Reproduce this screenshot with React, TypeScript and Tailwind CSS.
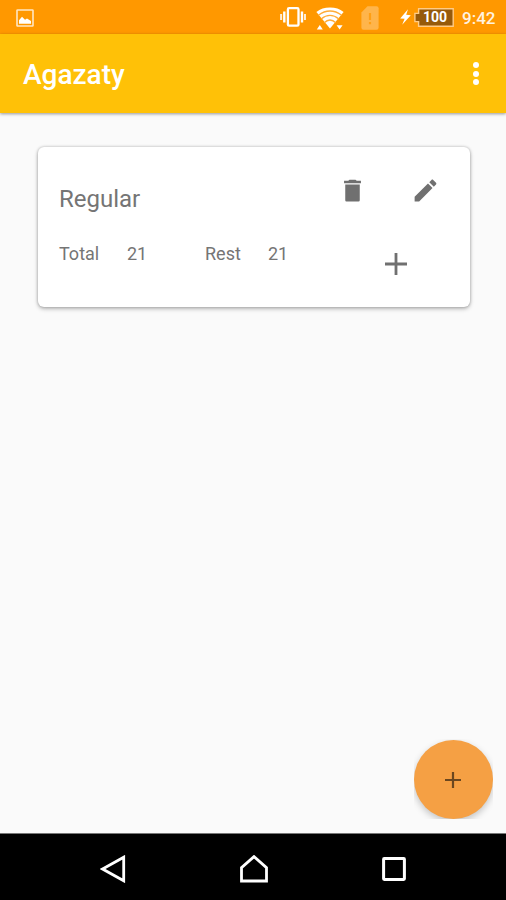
import React from 'react';

interface IconProps {
	className?: string;
}

function PictureIcon({ className }: IconProps) {
	return (
		<svg viewBox="0 0 18 18" className={className}>
			<rect x="1" y="1" width="16" height="16" rx="0.6" fill="none" stroke="#ffe6c4" strokeWidth="1.6" />
			<path d="M3 14.8V11.2L6 7.8L9 10.8L11 9.6L15 12V14.8Z" fill="#fff" />
		</svg>
	);
}

function VibrateIcon({ className }: IconProps) {
	return (
		<svg viewBox="0 0 26 20" className={className} fill="none" stroke="#fff">
			<rect x="7.9" y="1.2" width="10.6" height="17.4" rx="1.2" strokeWidth="2.3" />
			<path d="M4.3 4.5v11M22 4.5v11" strokeWidth="2.4" />
			<path d="M1.1 7v6M25 7v6" strokeWidth="2" stroke="#ffecd2" />
		</svg>
	);
}

function WifiIcon({ className }: IconProps) {
	return (
		<svg viewBox="0 0 28 24" className={className}>
			<path d="M14 21.5L0.4 5Q6 0.6 14 0.6T27.6 5Z" fill="#fff" />
			<path
				d="M2.4 8.3Q8 4 14 4T25.6 8.3M5.2 12Q9.5 8.4 14 8.4T22.8 12M8.2 15.8Q11 13 14 13T19.8 15.8"
				fill="none"
				stroke="#ffac38"
				strokeWidth="1.3"
			/>
			<path d="M0.8 22.4L3.8 18L6.8 22.4ZM20.6 18.2H26.6L23.6 22.6Z" fill="#fff" />
		</svg>
	);
}

function SimAlertIcon({ className }: IconProps) {
	return (
		<svg viewBox="0 0 18 24" className={className}>
			<path
				d="M6.5 0.2H15.5Q17.6 0.2 17.6 2.3V21.7Q17.6 23.8 15.5 23.8H2.5Q0.4 23.8 0.4 21.7V6.5Z"
				fill="#ffb54b"
			/>
			<path d="M9 7v7M9 16v2.2" stroke="#ff9f14" strokeWidth="2.2" />
		</svg>
	);
}

function BoltIcon({ className }: IconProps) {
	return (
		<svg viewBox="0 0 11 16" className={className}>
			<path d="M8 0.2L0.2 9.4L4.6 9.8L2.2 15.8L10.8 6.2L6.2 5.8Z" fill="#fff" />
		</svg>
	);
}

function Battery({ level }: { level: number }) {
	return (
		<div className="relative flex h-[19px] w-[40px] items-center justify-center">
			<svg viewBox="0 0 40 19" className="absolute inset-0 h-full w-full">
				<path
					d="M4.6 0.8H39.2V18.2H4.6V13.6H0.9V5.4H4.6Z"
					fill="#965a0a"
					stroke="#ffcb86"
					strokeWidth="1.4"
				/>
			</svg>
			<span className="relative left-[1.5px] text-[14px] font-bold leading-none text-white">{level}</span>
		</div>
	);
}

function StatusBar() {
	return (
		<header className="flex h-[34px] items-start bg-[#ff9800] pl-[16px] pr-[10px]">
			<PictureIcon className="mt-[9px] h-[18px] w-[18px]" />
			<div className="ml-auto flex items-start">
				<VibrateIcon className="mt-[7px] h-[20px] w-[26px]" />
				<WifiIcon className="ml-[10.5px] mt-[7px] h-[24px] w-[28px]" />
				<SimAlertIcon className="ml-[16.5px] mt-[6px] h-[24px] w-[18px]" />
				<BoltIcon className="ml-[21px] mt-[9px] h-[16px] w-[11px]" />
				<div className="ml-[3px] mt-[7.5px]">
					<Battery level={100} />
				</div>
				<span className="ml-[8.5px] mt-[7.5px] w-[34px] whitespace-nowrap text-[17px] font-medium leading-[20px] text-[#fff3e0]">
					9:42
				</span>
			</div>
		</header>
	);
}

function AppBar() {
	return (
		<div className="z-10 flex h-[79px] items-center justify-between bg-[#ffc107] pl-[23px] pr-[27px] shadow-[0_1px_3px_rgba(0,0,0,0.4)]">
			<h1 className="pt-[2px] text-[28px] font-medium leading-[32px] text-white">Agazaty</h1>
			<button type="button" aria-label="More options" className="flex flex-col gap-[2.4px]">
				<span className="h-[6px] w-[6px] rounded-full bg-white" />
				<span className="h-[6px] w-[6px] rounded-full bg-white" />
				<span className="h-[6px] w-[6px] rounded-full bg-white" />
			</button>
		</div>
	);
}

interface LeaveCardProps {
	name: string;
	total: number;
	rest: number;
}

function LeaveCard({ name, total, rest }: LeaveCardProps) {
	return (
		<section className="ml-[38px] mt-[34px] flex h-[160px] w-[432px] rounded-[6px] bg-white pl-[21px] text-[#757575] shadow-[0_0_3px_rgba(0,0,0,0.25),0_2px_4px_rgba(0,0,0,0.25)]">
			<div className="w-[279px] pt-[37px]">
				<h2 className="text-[24px] leading-[30px]">{name}</h2>
				<div className="mt-[29px] flex text-[18px] leading-[22px]">
					<span className="w-[68px]">Total</span>
					<span className="w-[78px]">{total}</span>
					<span className="w-[63px]">Rest</span>
					<span>{rest}</span>
				</div>
			</div>
			<div className="pt-[29px]">
				<div className="flex gap-[44px]">
					<button type="button" aria-label="Delete">
						<svg viewBox="0 0 24 24" className="block h-[29px] w-[29px]" fill="#707070">
							<path d="M6 20q0 1 1 1h10q1 0 1-1V7H6v13zM19 4h-3.5l-1-1h-5l-1 1H5v2h14V4z" />
						</svg>
					</button>
					<button type="button" aria-label="Edit">
						<svg viewBox="0 0 24 24" className="block h-[29px] w-[29px]" fill="#707070">
							<path d="M3 17.25V21h3.75L17.81 9.94l-3.75-3.75L3 17.25zM20.71 7.04c.39-.39.39-1.02 0-1.41l-2.34-2.34c-.39-.39-1.02-.39-1.41 0l-1.83 1.83 3.75 3.75 1.83-1.83z" />
						</svg>
					</button>
				</div>
				<button type="button" aria-label="Add" className="ml-[47px] mt-[47.5px] block">
					<svg viewBox="0 0 22 22" className="block h-[22px] w-[22px]">
						<path d="M11 0v22M0 11h22" stroke="#707070" strokeWidth="2.8" />
					</svg>
				</button>
			</div>
		</section>
	);
}

function AddFab() {
	return (
		<button
			type="button"
			aria-label="Add leave type"
			className="absolute bottom-[14px] right-[13px] h-[80px] w-[79px] overflow-hidden"
		>
			<span className="flex h-[79px] w-[79px] items-center justify-center rounded-full bg-[#f5a044] pr-[1px] shadow-[0_3px_7px_rgba(0,0,0,0.22)]">
				<svg viewBox="0 0 16 16" className="mt-[1px] h-[16px] w-[16px]">
					<path d="M8 0v16M0 8h16" stroke="#6b471f" strokeWidth="2.2" />
				</svg>
			</span>
		</button>
	);
}

function NavigationBar() {
	return (
		<nav className="flex h-[67px] items-center justify-between border-t border-[#777] bg-black pl-[100px] pr-[100px] pt-[4px]">
			<svg viewBox="0 0 26 28" className="h-[28px] w-[26px]" fill="none" stroke="#fff" strokeWidth="2.8">
				<path d="M2.6 14L23.7 2.2V25.8Z" />
			</svg>
			<svg viewBox="0 0 28 28" className="h-[28px] w-[28px]" fill="none" stroke="#fff" strokeWidth="2.8">
				<path d="M1.5 26V12.6L14 1.6L26.5 12.6V26Z" />
			</svg>
			<svg viewBox="0 0 24 24" className="h-[24px] w-[24px]" fill="none" stroke="#fff" strokeWidth="3">
				<rect x="1.6" y="1.6" width="20.8" height="20.8" rx="0.6" />
			</svg>
		</nav>
	);
}

export default function App() {
	return (
		<div className="flex h-[900px] w-[506px] flex-col overflow-hidden bg-[#fafafa] font-[Roboto,sans-serif]">
			<StatusBar />
			<AppBar />
			<main className="relative flex-1">
				<div className="flex">
					<LeaveCard name="Regular" total={21} rest={21} />
				</div>
				<AddFab />
			</main>
			<NavigationBar />
		</div>
	);
}
